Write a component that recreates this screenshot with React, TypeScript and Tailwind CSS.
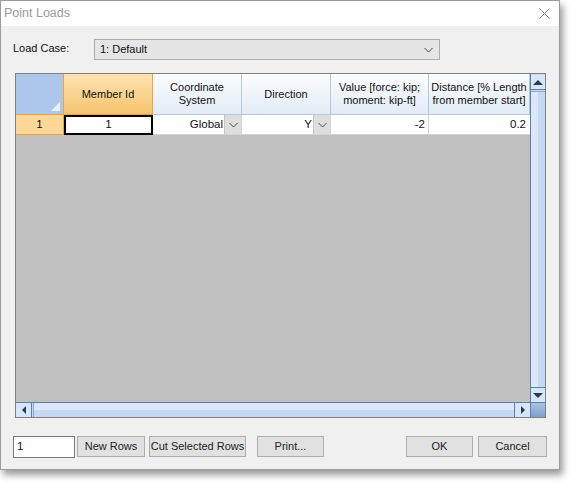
import React from "react";

const font = { fontFamily: '"Liberation Sans", Arial, sans-serif' };

function Chevron({ className = "" }: { className?: string }) {
  return (
    <svg width="9" height="6" viewBox="0 0 9 6" className={className}>
      <path d="M0.5 1 L4.5 5 L8.5 1" fill="none" stroke="#444" strokeWidth="1" />
    </svg>
  );
}

function CellDrop() {
  return (
    <div className="w-[17px] h-full bg-[#dedede] border-l border-[#c4c4c4] flex items-center justify-center">
      <Chevron />
    </div>
  );
}

function Btn({ label, w, className = "" }: { label: string; w: string; className?: string }) {
  return (
    <button
      className={`${w} h-[21px] bg-[#e1e1e1] border border-[#adadad] text-[11px] whitespace-nowrap text-[#222] ${className}`}
    >
      {label}
    </button>
  );
}

function Header({ lines, w, active }: { lines: string[]; w: string; active?: boolean }) {
  return (
    <div
      className={`${w} shrink-0 h-full flex flex-col items-center justify-center text-[11px] leading-[13px] border-r border-b ${
        active
          ? "bg-gradient-to-b from-[#fde3b2] to-[#f6c46c] border-[#f0a23c]"
          : "bg-gradient-to-b from-[#fbfdff] to-[#e2ebf6] border-[#b4c7e0]"
      }`}
    >
      {lines.map((l) => (
        <span key={l} className="whitespace-nowrap">{l}</span>
      ))}
    </div>
  );
}

export default function App() {
  return (
    <div className="w-[575px] h-[486px] bg-white relative text-[#111]" style={font}>
      {/* Window */}
      <div className="w-[560px] h-[470px] border border-[#9b9b9b] flex flex-col shadow-[3px_5px_7px_rgba(0,0,0,0.4)]">
        {/* Title bar */}
        <div className="h-[25px] bg-white flex items-center justify-between pl-[3px] pr-[9px]">
          <span className="text-[12.5px] text-[#9a9a9a]">Point Loads</span>
          <svg width="11" height="11" viewBox="0 0 11 11">
            <path d="M0.5 0.5 L10.5 10.5 M10.5 0.5 L0.5 10.5" stroke="#8a8a8a" strokeWidth="1" />
          </svg>
        </div>

        {/* Body */}
        <div className="flex-1 bg-[#f0f0f0] flex flex-col pl-[12px] pt-[13px]">
          {/* Load case */}
          <div className="flex items-start h-[21px]">
            <span className="w-[81px] text-[11px] pt-[1px]">Load Case:</span>
            <div className="w-[346px] h-[21px] bg-[#e5e5e5] border border-[#adadad] flex items-center justify-between pl-[5px] pr-[6px] text-[11px]">
              <span>1: Default</span>
              <Chevron />
            </div>
          </div>

          {/* Grid */}
          <div className="ml-[2px] mt-[13px] w-[531px] h-[345px] border border-[#808080] flex">
            <div className="flex-1 flex flex-col">
              <div className="flex-1 bg-[#c0c0c0] flex flex-col overflow-hidden">
                {/* header row */}
                <div className="flex h-[41px]">
                  <div className="w-[48px] shrink-0 h-full bg-[#adc7ec] border-r border-b border-[#f0a23c] relative">
                    <div className="absolute right-[3px] bottom-[3px] w-0 h-0 border-l-[9px] border-l-transparent border-b-[9px] border-b-[#e8f0fb]" />
                  </div>
                  <Header w="w-[89px]" lines={["Member Id"]} active />
                  <Header w="w-[89px]" lines={["Coordinate", "System"]} />
                  <Header w="w-[89px]" lines={["Direction"]} />
                  <Header w="w-[98px]" lines={["Value [force: kip;", "moment: kip-ft]"]} />
                  <Header w="w-[101px]" lines={["Distance [% Length", "from member start]"]} />
                </div>
                {/* data row */}
                <div className="flex h-[20px] text-[11.5px]">
                  <div className="w-[48px] shrink-0 bg-[#fcd798] border-r border-b border-[#f0a23c] flex items-center justify-center">
                    1
                  </div>
                  <div className="w-[89px] shrink-0 bg-white border-2 border-black flex items-center justify-center">
                    1
                  </div>
                  <div className="w-[89px] shrink-0 bg-white border-r border-b border-[#d4d4d4] flex items-center justify-end">
                    <span className="pr-[1px]">Global</span>
                    <CellDrop />
                  </div>
                  <div className="w-[89px] shrink-0 bg-white border-r border-b border-[#d4d4d4] flex items-center justify-end">
                    <span className="pr-[1px]">Y</span>
                    <CellDrop />
                  </div>
                  <div className="w-[98px] shrink-0 bg-white border-r border-b border-[#d4d4d4] flex items-center justify-end pr-[3px]">
                    -2
                  </div>
                  <div className="w-[101px] shrink-0 bg-white border-b border-[#d4d4d4] flex items-center justify-end pr-[4px]">
                    0.2
                  </div>
                </div>
              </div>
              {/* horizontal scrollbar */}
              <div className="h-[15px] flex border-t border-[#5f7fa8] bg-[#c9dbf3]">
                <div className="w-[16px] h-full border-r border-[#5f7fa8] bg-[#d6e5f8] flex items-center justify-center">
                  <div className="w-0 h-0 border-t-[4px] border-t-transparent border-b-[4px] border-b-transparent border-r-[4px] border-r-[#2d3a4c]" />
                </div>
                <div className="flex-1 flex flex-col ml-[1px] border-l border-[#8ea8cc]">
                  <div className="flex-1 bg-[#dbe8f9]" />
                  <div className="flex-1 bg-[#c6d9f3]" />
                </div>
                <div className="w-[16px] h-full border-l border-[#5f7fa8] bg-[#d6e5f8] flex items-center justify-center">
                  <div className="w-0 h-0 border-t-[4px] border-t-transparent border-b-[4px] border-b-transparent border-l-[4px] border-l-[#2d3a4c]" />
                </div>
              </div>
            </div>
            {/* vertical scrollbar */}
            <div className="w-[16px] flex flex-col border-l border-[#5f7fa8]">
              <div className="flex-1 flex flex-col bg-[#c9dbf3]">
                <div className="h-[15px] mt-[1px] border-b border-[#5f7fa8] bg-[#d6e5f8] flex items-center justify-center">
                  <div className="w-0 h-0 border-l-[5px] border-l-transparent border-r-[5px] border-r-transparent border-b-[5px] border-b-[#2d3a4c]" />
                </div>
                <div className="flex-1 flex mt-[1px] border-t border-[#8ea8cc]">
                  <div className="flex-1 bg-[#dbe8f9]" />
                  <div className="flex-1 bg-[#c6d9f3]" />
                </div>
                <div className="h-[15px] border-t border-[#5f7fa8] bg-[#d6e5f8] flex items-center justify-center">
                  <div className="w-0 h-0 border-l-[5px] border-l-transparent border-r-[5px] border-r-transparent border-t-[5px] border-t-[#2d3a4c]" />
                </div>
              </div>
              <div className="h-[15px] border-t border-[#5f7fa8] bg-gradient-to-b from-[#a9c2e6] to-[#7f9fd0]" />
            </div>
          </div>

          {/* Bottom controls */}
          <div className="flex items-start mt-[18px]">
            <div className="w-[62px] h-[22px] bg-white border border-[#7a7a7a] text-[11.5px] pl-[3px] leading-[18px]">1</div>
            <Btn label="New Rows" w="w-[68px]" className="ml-[2px]" />
            <Btn label="Cut Selected Rows" w="w-[97px]" className="ml-[4px]" />
            <Btn label="Print..." w="w-[67px]" className="ml-[11px]" />
            <Btn label="OK" w="w-[67px]" className="ml-[82px]" />
            <Btn label="Cancel" w="w-[69px]" className="ml-[5px]" />
          </div>
        </div>
      </div>
    </div>
  );
}
